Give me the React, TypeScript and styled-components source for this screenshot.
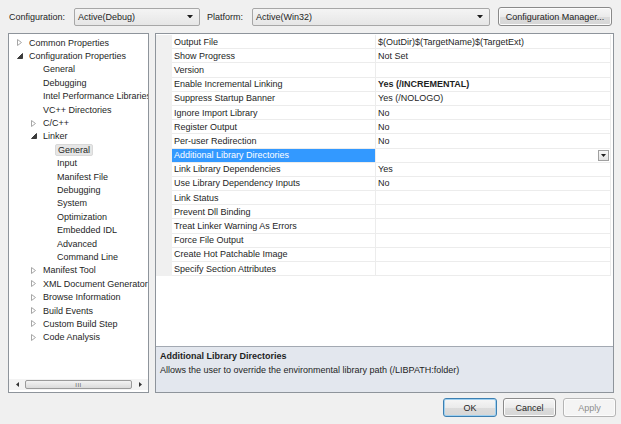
import styled, { createGlobalStyle } from 'styled-components'

const GlobalStyle = createGlobalStyle`
  html, body {
    margin: 0;
    padding: 0;
    background: #f0f0f0;
  }
  body {
    font-family: "Liberation Sans", Arial, sans-serif;
    font-size: 9px;
    color: #1e1e1e;
  }
`

const Window = styled.div`
  width: 621px;
  height: 424px;
  display: flex;
  flex-direction: column;
  background: #f0f0f0;
  overflow: hidden;
`

const TopBar = styled.div`
  height: 33px;
  display: flex;
  align-items: center;
  padding: 0 0 0 9px;
  box-sizing: border-box;
`

const Label = styled.span<{ $w: number }>`
  width: ${(p) => p.$w}px;
  flex: none;
`

const Select = styled.div<{ $w: number }>`
  width: ${(p) => p.$w}px;
  height: 18px;
  box-sizing: border-box;
  border: 1px solid #a7a7a7;
  border-radius: 2px;
  background: linear-gradient(#f4f4f4, #e6e6e6);
  display: flex;
  align-items: center;
  padding: 0 6px 0 3px;
  flex: none;
`

const SelectText = styled.span`
  flex: 1;
`

const Button = styled.div<{ $w: number; $focus?: boolean; $disabled?: boolean }>`
  width: ${(p) => p.$w}px;
  height: 19px;
  box-sizing: border-box;
  border: 1px solid ${(p) => (p.$focus ? '#3c7fb1' : p.$disabled ? '#b5b5b5' : '#8a8a8a')};
  border-radius: 3px;
  background: ${(p) => (p.$disabled ? '#f4f4f4' : 'linear-gradient(#f6f6f6 0%, #ebebeb 50%, #dcdcdc 51%, #d6d6d6 100%)')};
  box-shadow: ${(p) => (p.$focus ? 'inset 0 0 0 1px #9fd0f0' : 'inset 0 0 0 1px #fcfcfc')};
  color: ${(p) => (p.$disabled ? '#8c8c8c' : '#1e1e1e')};
  display: flex;
  align-items: center;
  justify-content: center;
  flex: none;
`

const Main = styled.div`
  height: 360px;
  display: flex;
  gap: 6px;
  padding: 0 7px 0 8px;
`

const TreePanel = styled.div`
  width: 141px;
  box-sizing: border-box;
  border: 1px solid #8e949b;
  background: #fff;
  display: flex;
  flex-direction: column;
  padding-bottom: 2px;
`

const TreeList = styled.div`
  flex: 1;
  padding-top: 2px;
  overflow: hidden;
  white-space: nowrap;
`

const TreeRow = styled.div<{ $level: number }>`
  height: 13.4px;
  display: flex;
  align-items: center;
  padding-left: ${(p) => 8 + p.$level * 14}px;
`

const Expander = styled.span`
  width: 12px;
  display: flex;
  align-items: center;
  flex: none;
`

const TreeText = styled.span<{ $selected?: boolean }>`
  padding: 1px 2px;
  margin-left: -2px;
  border-radius: 2px;
  ${(p) => p.$selected && 'background: #e6e6e6; border: 1px solid #d9d9d9; padding: 0 2px;'}
`

const HScroll = styled.div`
  height: 11px;
  display: flex;
  align-items: center;
  background: #f3f3f3;
`

const ScrollArrow = styled.div`
  width: 16px;
  display: flex;
  justify-content: center;
  align-items: center;
`

const ScrollThumb = styled.div`
  flex: 1;
  height: 9px;
  box-sizing: border-box;
  border: 1px solid #9a9a9a;
  border-radius: 2px;
  background: linear-gradient(#f3f3f3, #dadada);
  display: flex;
  align-items: center;
  justify-content: center;
  font-size: 6px;
  color: #555;
  letter-spacing: 0.5px;
`

const GridPanel = styled.div`
  flex: 1;
  box-sizing: border-box;
  border: 1px solid #8e949b;
  background: #fff;
  display: flex;
  flex-direction: column;
`

const Grid = styled.div`
  flex: 1;
  padding: 1px 2px 0 0;
`

const Row = styled.div`
  height: 14.2px;
  display: flex;
`

const Gutter = styled.div`
  width: 16px;
  background: #f0f0f0;
  flex: none;
`

const Cell = styled.div<{ $name?: boolean; $active?: boolean; $bold?: boolean }>`
  ${(p) => (p.$name ? 'width: 204px; flex: none;' : 'flex: 1;')}
  box-sizing: border-box;
  border-bottom: 1px solid #ececec;
  border-right: 1px solid #ececec;
  padding-left: 2px;
  display: flex;
  align-items: center;
  white-space: nowrap;
  overflow: hidden;
  font-weight: ${(p) => (p.$bold ? 'bold' : 'normal')};
  background: ${(p) => (p.$active ? '#3399ff' : 'transparent')};
  color: ${(p) => (p.$active ? '#fff' : '#1e1e1e')};
`

const CellText = styled.span`
  flex: 1;
`

const DropButton = styled.div`
  width: 11px;
  height: 11px;
  box-sizing: border-box;
  border: 1px solid #a0a0a0;
  background: linear-gradient(#f8f8f8, #e2e2e2);
  display: flex;
  align-items: center;
  justify-content: center;
  margin-right: 1px;
`

const Description = styled.div`
  height: 46px;
  box-sizing: border-box;
  border-top: 1px solid #a3a9b2;
  background: #e3e7ee;
  padding: 4px 4px 0 4px;
  display: flex;
  flex-direction: column;
  gap: 4px;
`

const DescTitle = styled.div`
  font-weight: bold;
`

const Footer = styled.div`
  flex: 1;
  display: flex;
  justify-content: flex-end;
  align-items: flex-start;
  padding: 5px 5px 0 0;
  gap: 6px;
`

const Collapsed = () => (
  <svg width="5" height="7" viewBox="0 0 5 7">
    <path d="M0.5 0.5 L4.5 3.5 L0.5 6.5 Z" fill="#fff" stroke="#a6a6a6" />
  </svg>
)

const ExpandedIcon = () => (
  <svg width="6" height="6" viewBox="0 0 6 6">
    <path d="M5.5 0.5 L5.5 5.5 L0.5 5.5 Z" fill="#3c3c3c" stroke="#3c3c3c" />
  </svg>
)

const DownArrow = ({ size = 7 }: { size?: number }) => (
  <svg width={size} height={size / 2 + 0.5} viewBox="0 0 7 4">
    <path d="M0 0 L7 0 L3.5 4 Z" fill="#1e1e1e" />
  </svg>
)

type TreeItem = { text: string; level: number; exp?: 'c' | 'e'; selected?: boolean }

const tree: TreeItem[] = [
  { text: 'Common Properties', level: 0, exp: 'c' },
  { text: 'Configuration Properties', level: 0, exp: 'e' },
  { text: 'General', level: 1 },
  { text: 'Debugging', level: 1 },
  { text: 'Intel Performance Libraries', level: 1 },
  { text: 'VC++ Directories', level: 1 },
  { text: 'C/C++', level: 1, exp: 'c' },
  { text: 'Linker', level: 1, exp: 'e' },
  { text: 'General', level: 2, selected: true },
  { text: 'Input', level: 2 },
  { text: 'Manifest File', level: 2 },
  { text: 'Debugging', level: 2 },
  { text: 'System', level: 2 },
  { text: 'Optimization', level: 2 },
  { text: 'Embedded IDL', level: 2 },
  { text: 'Advanced', level: 2 },
  { text: 'Command Line', level: 2 },
  { text: 'Manifest Tool', level: 1, exp: 'c' },
  { text: 'XML Document Generator', level: 1, exp: 'c' },
  { text: 'Browse Information', level: 1, exp: 'c' },
  { text: 'Build Events', level: 1, exp: 'c' },
  { text: 'Custom Build Step', level: 1, exp: 'c' },
  { text: 'Code Analysis', level: 1, exp: 'c' },
]

type Prop = { name: string; value?: string; bold?: boolean; active?: boolean }

const props: Prop[] = [
  { name: 'Output File', value: '$(OutDir)$(TargetName)$(TargetExt)' },
  { name: 'Show Progress', value: 'Not Set' },
  { name: 'Version' },
  { name: 'Enable Incremental Linking', value: 'Yes (/INCREMENTAL)', bold: true },
  { name: 'Suppress Startup Banner', value: 'Yes (/NOLOGO)' },
  { name: 'Ignore Import Library', value: 'No' },
  { name: 'Register Output', value: 'No' },
  { name: 'Per-user Redirection', value: 'No' },
  { name: 'Additional Library Directories', active: true },
  { name: 'Link Library Dependencies', value: 'Yes' },
  { name: 'Use Library Dependency Inputs', value: 'No' },
  { name: 'Link Status' },
  { name: 'Prevent Dll Binding' },
  { name: 'Treat Linker Warning As Errors' },
  { name: 'Force File Output' },
  { name: 'Create Hot Patchable Image' },
  { name: 'Specify Section Attributes' },
]

export default function App() {
  return (
    <Window>
      <GlobalStyle />
      <TopBar>
        <Label $w={65}>Configuration:</Label>
        <Select $w={126}>
          <SelectText>Active(Debug)</SelectText>
          <DownArrow size={6} />
        </Select>
        <Label $w={45} style={{ marginLeft: 7 }}>Platform:</Label>
        <Select $w={238}>
          <SelectText>Active(Win32)</SelectText>
          <DownArrow size={6} />
        </Select>
        <Button $w={114} style={{ marginLeft: 8 }}>Configuration Manager...</Button>
      </TopBar>

      <Main>
        <TreePanel>
          <TreeList>
            {tree.map((t, i) => (
              <TreeRow key={i} $level={t.level}>
                <Expander>
                  {t.exp === 'c' && <Collapsed />}
                  {t.exp === 'e' && <ExpandedIcon />}
                </Expander>
                <TreeText $selected={t.selected}>{t.text}</TreeText>
              </TreeRow>
            ))}
          </TreeList>
          <HScroll>
            <ScrollArrow>
              <svg width="3" height="5" viewBox="0 0 3 5"><path d="M3 0 L0 2.5 L3 5 Z" fill="#333" /></svg>
            </ScrollArrow>
            <ScrollThumb>III</ScrollThumb>
            <ScrollArrow>
              <svg width="3" height="5" viewBox="0 0 3 5"><path d="M0 0 L3 2.5 L0 5 Z" fill="#333" /></svg>
            </ScrollArrow>
          </HScroll>
        </TreePanel>

        <GridPanel>
          <Grid>
            {props.map((p) => (
              <Row key={p.name}>
                <Gutter />
                <Cell $name $active={p.active}>{p.name}</Cell>
                <Cell $bold={p.bold}>
                  <CellText>{p.value}</CellText>
                  {p.active && (
                    <DropButton>
                      <DownArrow size={5} />
                    </DropButton>
                  )}
                </Cell>
              </Row>
            ))}
          </Grid>
          <Description>
            <DescTitle>Additional Library Directories</DescTitle>
            <div>Allows the user to override the environmental library path (/LIBPATH:folder)</div>
          </Description>
        </GridPanel>
      </Main>

      <Footer>
        <Button $w={54} $focus>OK</Button>
        <Button $w={53}>Cancel</Button>
        <Button $w={53} $disabled style={{ marginLeft: 1 }}>Apply</Button>
      </Footer>
    </Window>
  )
}
